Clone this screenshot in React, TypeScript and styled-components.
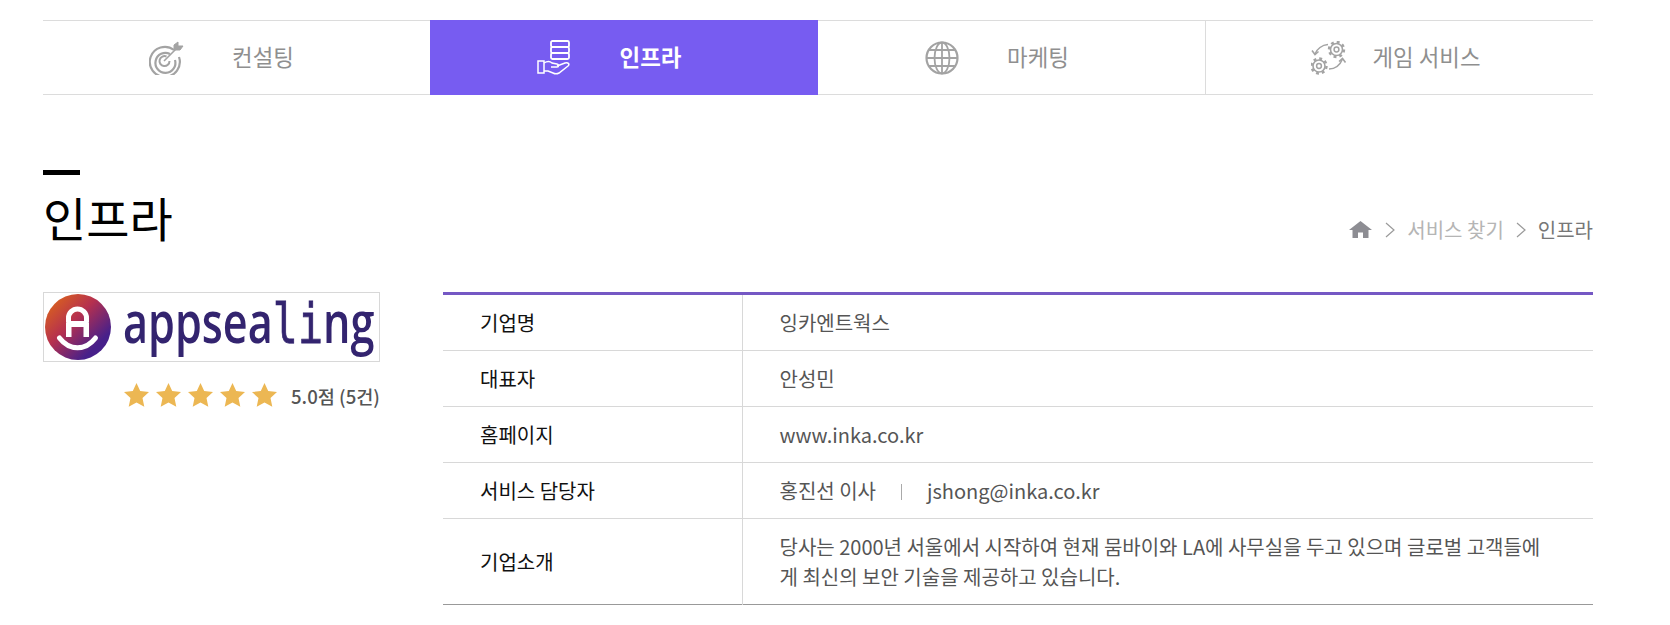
import styled, { createGlobalStyle } from "styled-components";

const fontStack = `"Noto Sans CJK KR", "Noto Sans", sans-serif`;

const GlobalStyle = createGlobalStyle`
  html, body {
    margin: 0;
    padding: 0;
    background: #fff;
    font-family: ${fontStack};
  }
  * {
    box-sizing: border-box;
  }
`;

function TargetIcon() {
  return (
    <svg width="36" height="34" viewBox="0 0 36 34" fill="none" stroke="#a3a3a3">
      <path d="M25 9A15 15 0 1 0 30 16" strokeWidth="2.2" />
      <path d="M21 13A10 10 0 1 0 26 19" strokeWidth="2.2" />
      <path d="M17.500 15.500A5 5 0 1 0 20.500 20" strokeWidth="2" />
      <path d="M15 20L28 7" strokeWidth="1.6" />
      <path d="M25 9V4l4-3v4h5l-3 4h-5z" fill="#a3a3a3" strokeWidth="1" />
    </svg>
  );
}

function ServerHandIcon() {
  return (
    <svg width="36" height="35" viewBox="0 0 36 35" fill="none" stroke="#fff" strokeWidth="1.5">
      <rect x="14" y="1" width="18" height="6" rx="1.5" strokeWidth="1.8" />
      <rect x="14" y="7" width="18" height="6" rx="1.5" strokeWidth="1.8" />
      <rect x="14" y="13" width="18" height="6" rx="1.5" strokeWidth="1.8" />
      <rect x="1" y="21" width="6" height="12" />
      <path d="M7 23c3-2 6-2 8 0l5 1c2 .5 2 3 0 3h-6" />
      <path d="M20 26l8-3c3-1 5 1 3 3l-9 7c-2 1-4 1-6 0l-5-2H7" />
    </svg>
  );
}

function GlobeIcon() {
  return (
    <svg width="36" height="34" viewBox="0 0 36 34" fill="none" stroke="#a3a3a3" strokeWidth="1.8">
      <circle cx="18" cy="17" r="15.500" strokeWidth="2.200" />
      <ellipse cx="18" cy="17" rx="7.500" ry="15.500" />
      <path d="M18 1.500v31M2.500 17h31M5 9h26M5 25h26" />
    </svg>
  );
}

function Gear({ x, y }: { x: number; y: number }) {
  return (
    <g transform={`translate(${x} ${y})`}>
      <circle r="6" strokeWidth="1.6" />
      <circle r="7.500" strokeWidth="2.400" strokeDasharray="2.900 2.990" />
      <circle r="2.400" strokeWidth="1.500" />
    </g>
  );
}

function GearsIcon() {
  return (
    <svg width="36" height="34" viewBox="0 0 36 34" fill="none" stroke="#a3a3a3" strokeWidth="1.600">
      <Gear x={25.5} y={8.5} />
      <Gear x={8} y={25} />
      <path d="M17 3.500C11 4 6 8 4 13" />
      <path d="M1 9.500l3 4 3.500-3" />
      <path d="M18 28C24 28 29 24 31.500 18" />
      <path d="M28 20.500l3.500-3 3 4" />
    </svg>
  );
}

function HomeIcon() {
  return (
    <HomeSvg width="23" height="17" viewBox="0 0 23 17" fill="#8d8d93">
      <path d="M11.500 0L0 9h3.500v8h5.500v-5.500h5V17h5.500V9H23z" />
    </HomeSvg>
  );
}

function Chevron() {
  return (
    <ChevronSvg width="10" height="16" viewBox="0 0 10 16" fill="none" stroke="#9a9a9a" strokeWidth="1.200">
      <path d="M1 1l8 7-8 7" />
    </ChevronSvg>
  );
}

function AppSealingLogo() {
  return (
    <LogoSvg width="335" height="68" viewBox="0 0 335 68">
      <defs>
        <linearGradient id="seal" x1="0.1" y1="0.1" x2="0.9" y2="0.9">
          <stop offset="0" stopColor="#d9601f" />
          <stop offset="0.4" stopColor="#b5304f" />
          <stop offset="0.85" stopColor="#47208a" />
        </linearGradient>
      </defs>
      <circle cx="34" cy="34" r="33" fill="url(#seal)" />
      <g transform="translate(1 1)">
        <path d="M23.500 28V24a9 9 0 0 1 18 0v4" fill="none" stroke="#fff" strokeWidth="5" />
        <path d="M23 27h19a2 2 0 0 1 2 2v14h-5.500V33h-12v10H21V29a2 2 0 0 1 2-2z" fill="#fff" />
        <path d="M14.500 44c10 13 26 13 36 0" fill="none" stroke="#fff" strokeWidth="5" strokeLinecap="round" />
      </g>
      <g transform="translate(79 50) scale(.745 1)">
        <LogoWord>
          appsea<LogoSlab>li</LogoSlab>ng
        </LogoWord>
      </g>
    </LogoSvg>
  );
}

function Star() {
  return (
    <svg width="25" height="24" viewBox="0 0 25 24" fill="#ecb753">
      <path d="M12.500 0l3.700 8.100 8.800 1-6.500 6 1.800 8.700-7.800-4.400-7.800 4.400 1.800-8.700L0 9.100l8.800-1z" />
    </svg>
  );
}

const tabs = [
  { label: "컨설팅", icon: <TargetIcon />, gap: 46, shift: 31 },
  { label: "인프라", icon: <ServerHandIcon />, gap: 46, shift: 31, active: true },
  { label: "마케팅", icon: <GlobeIcon />, gap: 46, shift: 31 },
  { label: "게임 서비스", icon: <GearsIcon />, gap: 24, shift: 8 },
];

export default function App() {
  return (
    <>
      <GlobalStyle />
      <Page>
        <TabBar>
          {tabs.map((tab) => (
            <Tab key={tab.label} $active={tab.active} $gap={tab.gap} $shift={tab.shift}>
              <TabIcon>{tab.icon}</TabIcon>
              <TabLabel>{tab.label}</TabLabel>
            </Tab>
          ))}
        </TabBar>

        <TitleRow>
          <Title>인프라</Title>
          <Breadcrumb>
            <HomeIcon />
            <Chevron />
            <Crumb>서비스 찾기</Crumb>
            <Chevron />
            <Crumb $current>인프라</Crumb>
          </Breadcrumb>
        </TitleRow>

        <Content>
          <Aside>
            <LogoBox>
              <AppSealingLogo />
            </LogoBox>
            <Rating>
              <Stars>
                <Star />
                <Star />
                <Star />
                <Star />
                <Star />
              </Stars>
              <Score>5.0점 (5건)</Score>
            </Rating>
          </Aside>

          <InfoTable>
            <tbody>
              <tr>
                <th>기업명</th>
                <td>잉카엔트웍스</td>
              </tr>
              <tr>
                <th>대표자</th>
                <td>안성민</td>
              </tr>
              <tr>
                <th>홈페이지</th>
                <td>www.inka.co.kr</td>
              </tr>
              <tr>
                <th>서비스 담당자</th>
                <td>
                  홍진선 이사
                  <Divider />
                  jshong@inka.co.kr
                </td>
              </tr>
              <tr>
                <th>기업소개</th>
                <td className="intro">
                  당사는 2000년 서울에서 시작하여 현재 뭄바이와 LA에 사무실을 두고 있으며 글로벌 고객들에
                  <br />
                  게 최신의 보안 기술을 제공하고 있습니다.
                </td>
              </tr>
            </tbody>
          </InfoTable>
        </Content>
      </Page>
    </>
  );
}

const Page = styled.div`
  width: 1550px;
  margin-left: 43px;
  padding-top: 20px;
`;

const TabBar = styled.div`
  display: grid;
  grid-template-columns: 387px 388px 387px 1fr;
  height: 75px;
  border-top: 1px solid #dcdcdc;
  border-bottom: 1px solid #dcdcdc;
`;

const Tab = styled.div<{ $active?: boolean; $gap: number; $shift: number }>`
  display: flex;
  align-items: center;
  justify-content: center;
  gap: ${(p) => p.$gap}px;
  padding-right: ${(p) => p.$shift}px;
  margin: ${(p) => (p.$active ? "-1px 0" : "0")};
  font-size: 22.4px;
  font-weight: ${(p) => (p.$active ? 700 : 400)};
  color: ${(p) => (p.$active ? "#fff" : "#8f8f8f")};
  background: ${(p) => (p.$active ? "#775cf1" : "transparent")};

  &:last-child {
    border-left: 1px solid #dcdcdc;
  }
`;

const TabIcon = styled.span`
  display: flex;
  width: 38px;
  justify-content: center;
`;

const TabLabel = styled.span`
  padding-bottom: 4px;
`;

const TitleRow = styled.div`
  display: flex;
  justify-content: space-between;
  align-items: flex-end;
  margin-top: 72px;
`;

const Title = styled.h2`
  margin: 0;
  font-size: 47px;
  font-weight: 400;
  line-height: 72px;
  color: #000;
  padding-top: 3px;

  &::before {
    content: "";
    display: block;
    width: 37px;
    height: 5px;
    margin-bottom: 6px;
    background: #000;
  }
`;

const Breadcrumb = styled.div`
  display: flex;
  align-items: center;
  gap: 9px;
  font-size: 20px;
  padding-bottom: 9px;
`;

const HomeSvg = styled.svg`
  margin-right: 1px;
`;

const ChevronSvg = styled.svg`
  margin: 0 3px;
`;

const Crumb = styled.span<{ $current?: boolean }>`
  color: ${(p) => (p.$current ? "#777" : "#b5b5b5")};
`;

const Content = styled.div`
  display: flex;
  gap: 63px;
  margin-top: 39px;
`;

const Aside = styled.div`
  width: 337px;
  flex: none;
`;

const LogoBox = styled.div`
  display: flex;
  height: 70px;
  border: 1px solid #d8d8d8;
`;

const LogoSvg = styled.svg`
  overflow: visible;
`;

const LogoWord = styled.text`
  font-family: "Open Sans", sans-serif;
  font-size: 58px;
  font-weight: 600;
  fill: #33246f;
`;

const LogoSlab = styled.tspan`
  font-family: "DejaVu Sans Mono", monospace;
  font-size: 56px;
  font-weight: 400;
  stroke: #33246f;
  stroke-width: 0.8px;
`;

const Rating = styled.div`
  display: flex;
  align-items: center;
  justify-content: flex-end;
  gap: 14px;
  margin-top: 20px;
  height: 26px;
`;

const Stars = styled.div`
  display: flex;
  gap: 7px;
`;

const Score = styled.span`
  font-size: 18.6px;
  font-weight: 500;
  color: #555;
`;

const InfoTable = styled.table`
  flex: 1;
  border-collapse: collapse;
  border-top: 3px solid #7558c4;
  border-bottom: 1px solid #999;
  font-size: 20px;
  align-self: flex-start;

  th,
  td {
    height: 56px;
    padding: 0;
    border-bottom: 1px solid #d8d8d8;
    text-align: left;
    font-weight: 400;
  }

  tr:first-child th,
  tr:first-child td {
    height: 57px;
  }

  tr:last-child th,
  tr:last-child td {
    border-bottom: none;
    height: 86px;
  }

  th {
    width: 299px;
    padding-left: 37px;
    color: #111;
    border-right: 1px solid #d8d8d8;
  }

  td {
    padding-left: 37px;
    color: #555;
  }

  td.intro {
    line-height: 30px;
  }
`;

const Divider = styled.span`
  display: inline-block;
  width: 1px;
  height: 16px;
  margin: 0 25px;
  background: #aaa;
  vertical-align: -1px;
`;
